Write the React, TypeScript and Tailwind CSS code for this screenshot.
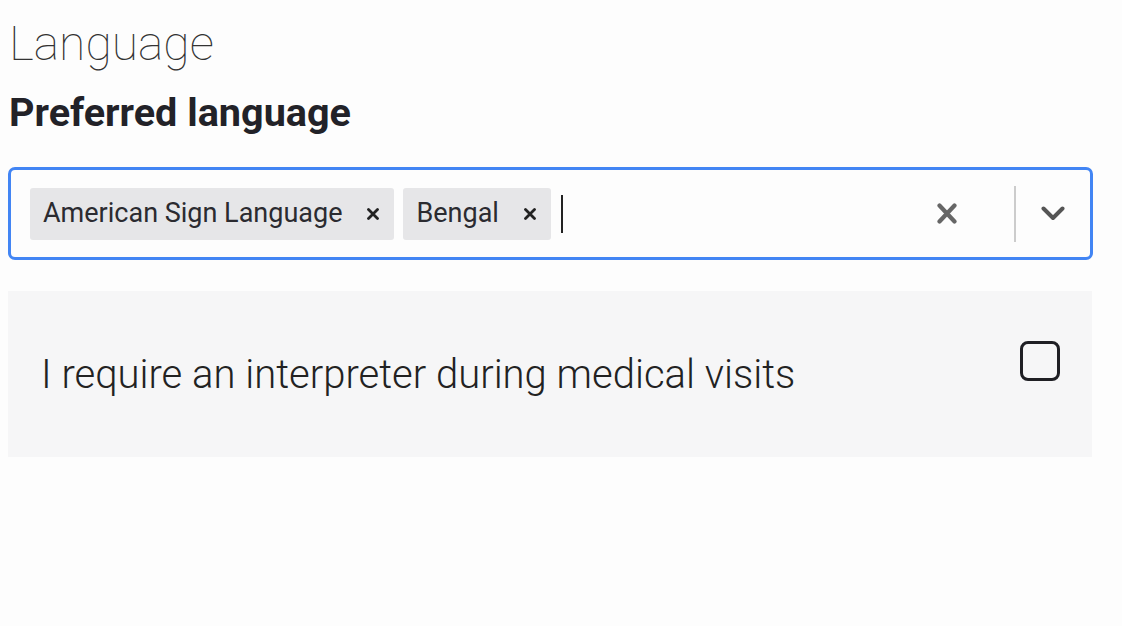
function SmallX() {
  return (
    <svg width="12" height="12" viewBox="0 0 12 12" className="shrink-0">
      <path d="M1.5 1.5 L10.5 10.5 M10.5 1.5 L1.5 10.5" stroke="#222" strokeWidth="2.8" strokeLinecap="round" />
    </svg>
  );
}

function Chip({ label }: { label: string }) {
  return (
    <div className="flex items-center h-[52px] bg-[#e6e6e8] rounded-[3px] pl-[13px] pr-[15px] mr-[9px]">
      <span className="text-[27px] text-[#2b2b30] leading-none">{label}</span>
      <div className="ml-[25px]">
        <SmallX />
      </div>
    </div>
  );
}

export default function App() {
  return (
    <div className="min-h-screen bg-[#fdfdfd] px-[8px] pt-[14px] font-['Roboto',sans-serif]">
      <h1 className="text-[48px] font-thin text-[#333] leading-[60px] pl-[1px]">Language</h1>
      <h2 className="text-[39.6px] font-bold text-[#222228] leading-[46px] mt-[16px] pl-[1px]">
        Preferred language
      </h2>

      <div className="mt-[31px] w-[1085px] h-[93px] border-[3px] border-[#4285f4] rounded-[7px] flex items-center pl-[19px]">
        <div className="flex flex-1 items-center">
          <Chip label="American Sign Language" />
          <Chip label="Bengal" />
          <div className="w-[2px] h-[38px] bg-[#222] ml-[1px]" />
        </div>
        <svg width="20" height="21" viewBox="0 0 20 21" className="mr-[57px]">
          <path d="M2.5 2.5 L17.5 18.5 M17.5 2.5 L2.5 18.5" stroke="#666" strokeWidth="4.2" strokeLinecap="round" />
        </svg>
        <div className="w-[2px] h-[56px] bg-[#ccc]" />
        <div className="w-[74px] flex justify-center">
          <svg width="24" height="15" viewBox="0 0 24 15">
            <path d="M2.5 2.5 L12 12 L21.5 2.5" stroke="#555" strokeWidth="4" strokeLinecap="round" strokeLinejoin="round" fill="none" />
          </svg>
        </div>
      </div>

      <div className="mt-[31px] w-[1084px] h-[166px] bg-[#f6f6f7] flex items-start justify-between pl-[33px] pr-[32px]">
        <p className="text-[40px] font-light text-[#222] mt-[60px] leading-[48px]">
          I require an interpreter during medical visits
        </p>
        <div className="mt-[50px] w-[40px] h-[40px] border-[3px] border-[#1f1f24] rounded-[8px]" />
      </div>
    </div>
  );
}
